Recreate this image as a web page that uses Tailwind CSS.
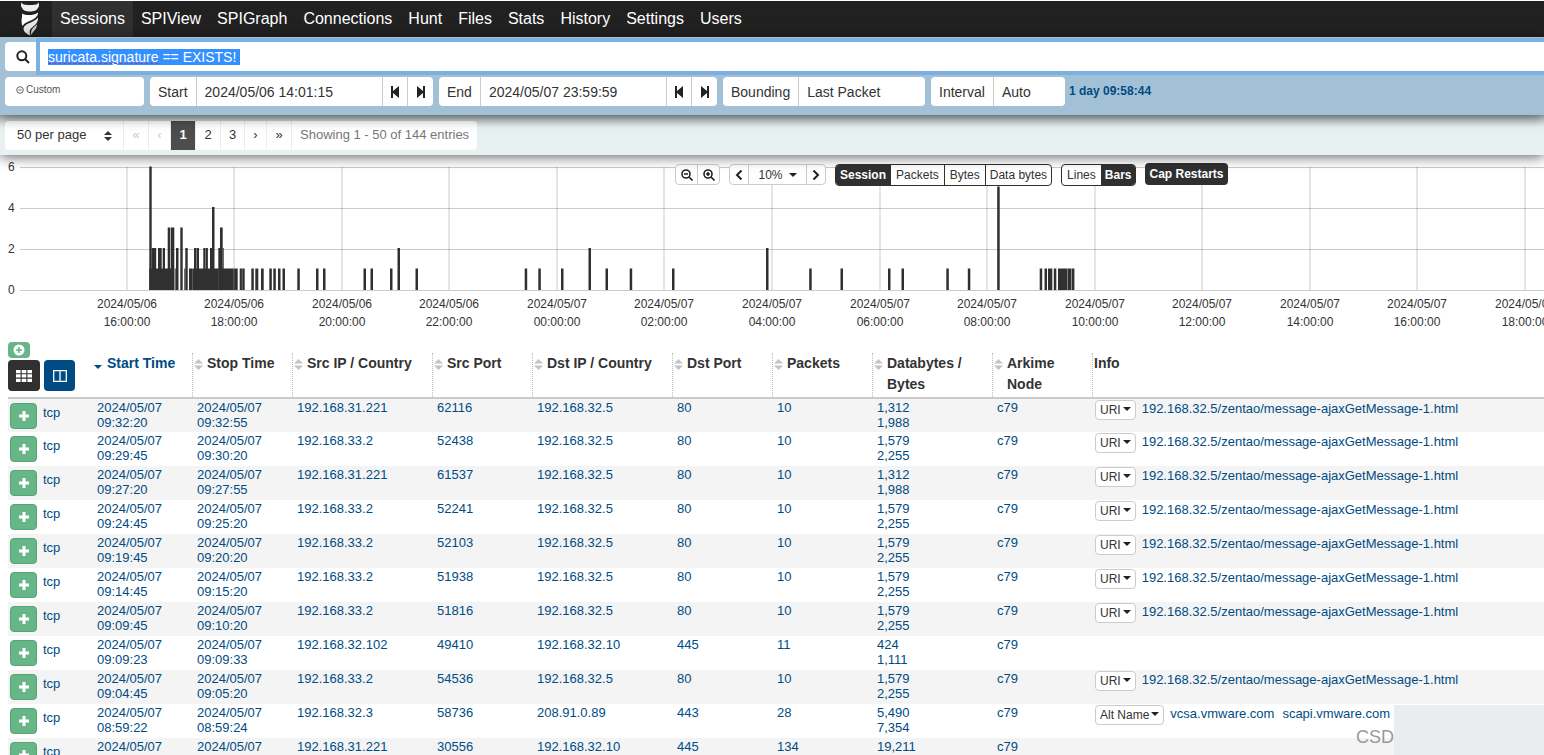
<!DOCTYPE html>
<html lang="en">
<head>
    <meta charset="UTF-8">
    <meta name="viewport" content="width=device-width, initial-scale=1.0">
    <title>Sessions</title>
    <script src="https://cdn.jsdelivr.net/npm/@tailwindcss/browser@4"></script>
</head>
<body class="relative h-screen overflow-hidden bg-white font-['Liberation_Sans',Arial,sans-serif] text-sm text-[#333]">

    <!-- Navbar -->
    <nav class="mt-px flex h-9 items-stretch bg-[#212121] text-base text-white">
        <a href="#" aria-label="Home" class="flex w-13 items-center justify-end pr-3">
            <svg class="h-[34px] w-5" viewBox="0 0 20 34">
                <path d="M1.500 0.500C3 3 6 3 10 3S17 3 18.500 0.500C19.500 3 19 5 17.500 6.500C17 8.500 14 9.500 10 9.500S3 8.500 2.500 6.500C1 5 0.500 3 1.500 0.500Z" fill="#eee"/>
                <path d="M2 11.500C6 13.500 13 14 18 10.500C18.500 15 13 17.500 8.500 19.500C5.500 21 3.500 22 2.500 24C0.500 19 2.500 15.500 2 11.500Z" fill="#fff"/>
                <path d="M18 15.500C18.500 21.500 14 23.500 11 26.500C9 28.500 9.500 31 10.500 33.500C5 31.500 2.500 28 4 25C6 21 14 20.500 18 15.500Z" fill="#e8e8e8"/>
                <path d="M17 22.500C17 27 13 29 11.500 33C10 29 12.500 26 17 22.500Z" fill="#ccc"/>
            </svg>
        </a>
        <a href="#" class="flex items-center bg-[#303030] px-2">Sessions</a>
        <a href="#" class="flex items-center px-2">SPIView</a>
        <a href="#" class="flex items-center px-2">SPIGraph</a>
        <a href="#" class="flex items-center px-2">Connections</a>
        <a href="#" class="flex items-center px-2">Hunt</a>
        <a href="#" class="flex items-center px-2">Files</a>
        <a href="#" class="flex items-center px-2">Stats</a>
        <a href="#" class="flex items-center px-2">History</a>
        <a href="#" class="flex items-center px-2">Settings</a>
        <a href="#" class="flex items-center px-2">Users</a>
    </nav>

    <!-- Search -->
    <form class="relative z-20 h-[78px] overflow-hidden bg-[#a3c1d6] pt-[5px] pl-[5px] shadow-[0_2px_12px_rgba(0,0,0,0.6)]">
        <div class="flex h-[29px]">
            <label for="query" class="flex w-[35px] items-center justify-center rounded-l bg-white">
                <svg class="h-3.5 w-3.5" viewBox="0 0 14 14" fill="none" stroke="#222" stroke-width="2"><circle cx="5.800" cy="5.800" r="4.500"/><path d="M9 9L13 13"/></svg>
            </label>
            <div class="relative flex-1">
                <input id="query" type="text" value="suricata.signature == EXISTS! " spellcheck="false" class="h-full w-full bg-white pl-2 text-sm shadow-[0_0_0_4px_#7bb0e0] outline-none selection:bg-[#3390ff] selection:text-white">
                <span class="absolute top-[21px] left-2 h-px w-[110px] border-b border-dashed border-[#b03a8c]"></span>
            </div>
        </div>
        <div class="mt-1.5 flex h-[29px] gap-1.5">
            <div class="flex w-[139px] rounded bg-white pb-1 pl-[11px]">
                <label for="range" class="flex items-center" aria-label="Time range">
                    <svg class="h-2 w-2" viewBox="0 0 8 8" fill="none" stroke="#666"><circle cx="4" cy="4" r="3.300"/><path d="M2.500 4H5.500"/></svg>
                </label>
                <select id="range" class="flex-1 appearance-none bg-transparent pt-px pl-0.5 text-[10px] text-[#555]"><option>Custom</option></select>
            </div>
            <div class="flex w-[283px] divide-x divide-[#ccc] rounded bg-white">
                <label for="start" class="flex items-center px-2">Start</label>
                <input id="start" type="text" value="2024/05/06 14:01:15" class="min-w-0 flex-1 px-2 outline-none">
                <button type="button" aria-label="Start of first day" class="flex w-[25px] items-center justify-center"><svg class="h-3 w-3" viewBox="0 0 12 12" fill="#222"><path d="M2 0H4V5L10 0V12L4 7V12H2Z"/></svg></button>
                <button type="button" aria-label="End of first day" class="flex w-[25px] items-center justify-center"><svg class="h-3 w-3" viewBox="0 0 12 12" fill="#222"><path d="M10 0H8V5L2 0V12L8 7V12H10Z"/></svg></button>
            </div>
            <div class="flex w-[278px] divide-x divide-[#ccc] rounded bg-white">
                <label for="end" class="flex items-center px-2">End</label>
                <input id="end" type="text" value="2024/05/07 23:59:59" class="min-w-0 flex-1 px-2 outline-none">
                <button type="button" aria-label="Start of last day" class="flex w-[25px] items-center justify-center"><svg class="h-3 w-3" viewBox="0 0 12 12" fill="#222"><path d="M2 0H4V5L10 0V12L4 7V12H2Z"/></svg></button>
                <button type="button" aria-label="End of last day" class="flex w-[25px] items-center justify-center"><svg class="h-3 w-3" viewBox="0 0 12 12" fill="#222"><path d="M10 0H8V5L2 0V12L8 7V12H10Z"/></svg></button>
            </div>
            <div class="flex w-[202px] divide-x divide-[#ccc] rounded bg-white">
                <label for="bounding" class="flex items-center px-2">Bounding</label>
                <select id="bounding" class="min-w-0 flex-1 appearance-none px-2"><option>Last Packet</option></select>
            </div>
            <div class="flex w-[134px] divide-x divide-[#ccc] rounded bg-white">
                <label for="interval" class="flex items-center px-2">Interval</label>
                <select id="interval" class="min-w-0 flex-1 appearance-none px-2"><option>Auto</option></select>
            </div>
            <strong class="-ml-0.5 pt-1.5 text-xs text-[#004b83]">1 day 09:58:44</strong>
        </div>
    </form>

    <!-- Paging -->
    <div class="relative z-10 h-10 bg-[#e7f1f1] pt-1.5 pl-[5px] shadow-[0_2px_12px_rgba(0,0,0,0.6)]">
        <div class="absolute inset-x-0 top-0 h-3 bg-linear-to-b from-black/20 to-transparent"></div>
        <div class="relative flex h-[29px] w-fit divide-x divide-[#eee] overflow-hidden rounded bg-white text-[13px]">
            <div class="relative w-[119px]">
                <select aria-label="Page size" class="h-full w-full appearance-none pl-3"><option>50 per page</option></select>
                <svg class="absolute top-2.5 right-[11px] h-2.5 w-2" viewBox="0 0 8 10" fill="#333"><path d="M4 0L8 4H0Z M0 6H8L4 10Z"/></svg>
            </div>
            <button type="button" class="w-[25px] text-[#ccc]">«</button>
            <button type="button" class="w-[22px] text-[#ccc]">‹</button>
            <button type="button" class="w-[25px] bg-[#4d4d4d] font-bold text-white">1</button>
            <button type="button" class="w-[25px]">2</button>
            <button type="button" class="w-6">3</button>
            <button type="button" class="w-[22px]">›</button>
            <button type="button" class="w-[25px]">»</button>
            <span class="flex items-center px-2 text-[#777]">Showing 1 - 50 of 144 entries</span>
        </div>
    </div>

    <!-- Timeline -->
    <section class="relative h-[185px]">
        <svg id="timeline" class="h-full w-full text-xs"></svg>
        <div class="absolute top-2 left-[675px] flex items-start gap-[9px] text-xs">
            <div class="mt-px flex h-[21px] divide-x divide-[#ccc] rounded border border-[#ccc] bg-white">
                <button type="button" aria-label="Zoom out" class="flex w-[22px] items-center justify-center"><svg class="h-3 w-3" viewBox="0 0 12 12" fill="none" stroke="#222" stroke-width="1.600"><circle cx="5" cy="5" r="4"/><path d="M8 8L11.500 11.500M3 5H7"/></svg></button>
                <button type="button" aria-label="Zoom in" class="flex w-[21px] items-center justify-center"><svg class="h-3 w-3" viewBox="0 0 12 12" fill="none" stroke="#222" stroke-width="1.600"><circle cx="5" cy="5" r="4"/><path d="M8 8L11.500 11.500M3 5H7M5 3V7"/></svg></button>
            </div>
            <div class="mt-px flex h-[21px] divide-x divide-[#ccc] rounded border border-[#ccc] bg-white">
                <button type="button" aria-label="Pan left" class="flex w-[19px] items-center justify-center"><svg class="h-2.5 w-2" viewBox="0 0 8 10" fill="none" stroke="#222" stroke-width="2"><path d="M6.500 0.500L2 5L6.500 9.500"/></svg></button>
                <button type="button" class="flex w-[58px] items-center justify-center gap-1.5">10% <svg class="h-1 w-2" viewBox="0 0 8 4" fill="#222"><path d="M0 0H8L4 4Z"/></svg></button>
                <button type="button" aria-label="Pan right" class="flex w-[18px] items-center justify-center"><svg class="h-2.5 w-2" viewBox="0 0 8 10" fill="none" stroke="#222" stroke-width="2"><path d="M1.500 0.500L6 5L1.500 9.500"/></svg></button>
            </div>
            <div class="mt-px flex h-[22px] divide-x divide-[#303030] overflow-hidden rounded border border-[#303030] bg-white">
                <button type="button" class="bg-[#303030] px-1 font-bold text-white">Session</button>
                <button type="button" class="px-[5px]">Packets</button>
                <button type="button" class="px-[5px]">Bytes</button>
                <button type="button" class="px-1">Data bytes</button>
            </div>
            <div class="mt-px flex h-[22px] overflow-hidden rounded border border-[#303030] bg-white">
                <button type="button" class="px-[5px]">Lines</button>
                <button type="button" class="bg-[#303030] px-1 font-bold text-white">Bars</button>
            </div>
            <button type="button" class="h-[22px] rounded bg-[#303030] px-1 font-bold text-white">Cap Restarts</button>
        </div>
    </section>

    <!-- Sessions -->
    <div class="pl-2">
        <table class="w-full table-fixed border-collapse">
            <colgroup>
                <col class="w-[84px]"><col class="w-[100px]"><col class="w-[100px]"><col class="w-[140px]"><col class="w-[100px]"><col class="w-[140px]"><col class="w-[100px]"><col class="w-[100px]"><col class="w-[120px]"><col class="w-[100px]"><col>
            </colgroup>
            <thead>
                <tr id="head" class="h-[58px] border-b-2 border-[#ccc] text-left align-bottom">
                    <th class="pb-1.5 align-bottom">
                        <button type="button" aria-label="Open all" class="mb-0.5 flex h-4 w-[22px] items-center justify-center rounded-sm bg-[#66b688]">
                            <svg class="h-3 w-3" viewBox="0 0 12 12"><circle cx="6" cy="6" r="5.500" fill="#fff"/><path d="M6 3V9M3 6H9" stroke="#66b688" stroke-width="1.600"/></svg>
                        </button>
                        <div class="flex gap-1">
                            <button type="button" aria-label="Toggle columns" class="flex h-[31px] w-8 items-center justify-center rounded bg-[#303030]">
                                <svg class="h-3 w-4" viewBox="0 0 16 12" fill="#fff"><path d="M0 0H4.600V3.300H0Z M5.700 0H10.300V3.300H5.700Z M11.400 0H16V3.300H11.400Z M0 4.300H4.600V7.600H0Z M5.700 4.300H10.300V7.600H5.700Z M11.400 4.300H16V7.600H11.400Z M0 8.700H4.600V12H0Z M5.700 8.700H10.300V12H5.700Z M11.400 8.700H16V12H11.400Z"/></svg>
                            </button>
                            <button type="button" aria-label="Column layouts" class="flex h-[31px] w-[31px] items-center justify-center rounded bg-[#004b83]">
                                <svg class="h-3 w-3.5" viewBox="0 0 14 12" fill="none" stroke="#fff" stroke-width="1.300"><path d="M0.700 0.700H13.300V11.300H0.700Z M7 0.700V11.300"/></svg>
                            </button>
                        </div>
                    </th>
                </tr>
            </thead>
            <tbody id="rows"></tbody>
        </table>
    </div>

    <div class="absolute right-0 bottom-0 z-30 flex h-[50px] items-end">
        <span class="pb-1 text-lg text-[#999]">CSD</span>
        <div class="h-full w-[150px] bg-[#e9edf0]"></div>
    </div>

    <script>
        // [x, width, sessions]
        const bars = [
            [149.3, 2.4, 6], [151.7, 4.5, 2], [158, 3.7, 2], [162.7, 2.3, 2], [167.7, 2.6, 3], [170.9, 3.4, 3], [176, 2.5, 2],
            [180.3, 2.4, 3], [185.3, 2.4, 2], [194, 2.4, 2], [196.6, 2.4, 2], [203.3, 2.2, 2], [205.7, 2.2, 2], [210, 2, 2],
            [212, 2.5, 4], [218.3, 1.7, 2], [220, 2.7, 3], [222.7, 1, 2], [149.3, 25, 1], [175.3, 1, 1], [184.3, 1, 1],
            [189, 3, 1], [192.2, 26, 1], [218.4, 15.4, 1], [234.1, 3.6, 1], [239.7, 2.2, 1], [242.2, 2.5, 1], [251.3, 2.5, 1],
            [255.3, 3, 1], [261, 2.7, 1], [269.3, 2.5, 1], [273.3, 2.5, 1], [278, 2.5, 1], [282.5, 2.5, 1], [297.3, 2.5, 1],
            [316, 2.5, 1], [323, 2.5, 1], [363.5, 2.5, 1], [370.5, 2.5, 1], [390, 2.5, 1], [397.5, 2.5, 2], [415.5, 2.5, 1],
            [524.7, 2.5, 1], [538.3, 2.5, 1], [561, 2.5, 1], [588.5, 2.5, 2], [605.5, 2.5, 1], [629.7, 2.5, 1],
            [672, 2.5, 1], [766, 2.5, 2], [809.2, 2.5, 1], [840.5, 2.5, 1], [888, 2.5, 1], [901.5, 2.5, 1],
            [946.3, 2.5, 1], [967.8, 2.5, 1], [997.2, 2.5, 5], [1039.7, 2.5, 1], [1044.5, 2.5, 1], [1048, 4.3, 1],
            [1053.8, 2.5, 1], [1058, 9.5, 1], [1067.8, 3.6, 1], [1071.8, 2.6, 1]
        ];
        let chart = '';
        for (let v = 0; v <= 6; v += 2) {
            const y = 135.5 - v * 20.5;
            chart += `<path d="M20 ${y}H4000" stroke="#ccc"/><text x="8" y="${y + 3}" fill="#333">${v}</text>`;
        }
        for (let i = 0; i < 14; i++) {
            const x = Math.floor(127.2 + i * 107.55);
            const hour = String((16 + i * 2) % 24).padStart(2, '0');
            chart += `<path d="M${x} 12V135" stroke="#000" stroke-opacity="0.1" stroke-width="2"/>`;
            chart += `<text x="${x}" y="153" text-anchor="middle" fill="#333">2024/05/0${i < 4 ? 6 : 7}</text>`;
            chart += `<text x="${x}" y="171" text-anchor="middle" fill="#333">${hour}:00:00</text>`;
        }
        bars.forEach(([x, w, n]) => {
            const h = Math.min(n * 20.5 + 1, 123.5);
            chart += `<rect x="${x}" y="${135 - h}" width="${w}" height="${h}" fill="#303030"/>`;
        });
        document.getElementById('timeline').innerHTML = chart;

        const columns = ['Start Time', 'Stop Time', 'Src IP / Country', 'Src Port', 'Dst IP / Country', 'Dst Port', 'Packets', 'Databytes / Bytes', 'Arkime Node', 'Info'];
        columns.forEach((name, i) => {
            let icon = '<svg class="mt-1.5 h-[11px] w-[9px] shrink-0" viewBox="0 0 9 11" fill="#c4c4c4"><path d="M4.500 0L9 4.500H0Z M0 6.500H9L4.500 11Z"/></svg>';
            if (i === 0) icon = '<svg class="mt-3 h-1 w-2 shrink-0" viewBox="0 0 8 4" fill="#004b83"><path d="M0 0H8L4 4Z"/></svg>';
            if (i === 9) icon = '';
            const border = i === 0 ? 'gap-[5px] pl-0.5 text-[#004b83]' : 'gap-1 border-l border-dotted border-[#bbb] pl-px';
            document.getElementById('head').insertAdjacentHTML('beforeend',
                `<th class="p-0 align-bottom"><div class="flex h-11 leading-[21px] ${border}">${icon}<span>${name}</span></div></th>`);
        });

        const uri = ['URI', '192.168.32.5/zentao/message-ajaxGetMessage-1.html'];
        const sessions = [
            ['09:32:20', '09:32:55', '192.168.31.221', '62116', '192.168.32.5', '80', '10', '1,312', '1,988', uri],
            ['09:29:45', '09:30:20', '192.168.33.2', '52438', '192.168.32.5', '80', '10', '1,579', '2,255', uri],
            ['09:27:20', '09:27:55', '192.168.31.221', '61537', '192.168.32.5', '80', '10', '1,312', '1,988', uri],
            ['09:24:45', '09:25:20', '192.168.33.2', '52241', '192.168.32.5', '80', '10', '1,579', '2,255', uri],
            ['09:19:45', '09:20:20', '192.168.33.2', '52103', '192.168.32.5', '80', '10', '1,579', '2,255', uri],
            ['09:14:45', '09:15:20', '192.168.33.2', '51938', '192.168.32.5', '80', '10', '1,579', '2,255', uri],
            ['09:09:45', '09:10:20', '192.168.33.2', '51816', '192.168.32.5', '80', '10', '1,579', '2,255', uri],
            ['09:09:23', '09:09:33', '192.168.32.102', '49410', '192.168.32.10', '445', '11', '424', '1,111', null],
            ['09:04:45', '09:05:20', '192.168.33.2', '54536', '192.168.32.5', '80', '10', '1,579', '2,255', uri],
            ['08:59:22', '08:59:24', '192.168.32.3', '58736', '208.91.0.89', '443', '28', '5,490', '7,354', ['Alt Name', 'vcsa.vmware.com', 'scapi.vmware.com']],
            ['', '', '192.168.31.221', '30556', '192.168.32.10', '445', '134', '19,211', '', null]
        ];
        const link = text => `<a href="#">${text}</a>`;
        const pair = (a, b) => b ? link(a) + '<br>' + link(b) : link(a);
        document.getElementById('rows').innerHTML = sessions.map(s => {
            let info = '';
            if (s[9]) {
                info = `<div class="flex items-start">
                    <button type="button" class="mt-px mr-1.5 flex h-5 items-center gap-0.5 rounded border border-[#ccc] bg-white px-1 text-xs text-[#333]">${s[9][0]}<svg class="mb-0.5 h-1 w-2" viewBox="0 0 8 4" fill="#222"><path d="M0 0H8L4 4Z"/></svg></button>
                    <span class="flex gap-2 pt-0.5">${s[9].slice(1).map(link).join('')}</span></div>`;
            }
            const cells = [
                pair('2024/05/07', s[0]), pair('2024/05/07', s[1]),
                link(s[2]), link(s[3]), link(s[4]), link(s[5]), link(s[6]),
                pair(s[7], s[8]), link('c79')
            ];
            return `<tr class="h-[34px] align-top text-[13px] leading-[15px] text-[#004b83] odd:bg-[#f4f4f4]">
                <td class="p-0"><div class="flex gap-1.5 pt-1 pl-0.5">
                    <button type="button" aria-label="Open session" class="flex h-[26px] w-[27px] items-center justify-center rounded-sm border border-[#55a577] bg-[#66b688]"><svg class="h-2.5 w-2.5" viewBox="0 0 10 10" stroke="#fff" stroke-width="3"><path d="M5 0V10M0 5H10"/></svg></button>
                    <span class="pt-0.5">${link('tcp')}</span></div></td>
                ${cells.map(c => `<td class="pt-px pr-0 pb-0 pl-[5px]">${c}</td>`).join('')}
                <td class="p-0 pl-[3px] whitespace-nowrap">${info}</td></tr>`;
        }).join('');

        const query = document.getElementById('query');
        query.focus();
        query.select();
    </script>
</body>
</html>
